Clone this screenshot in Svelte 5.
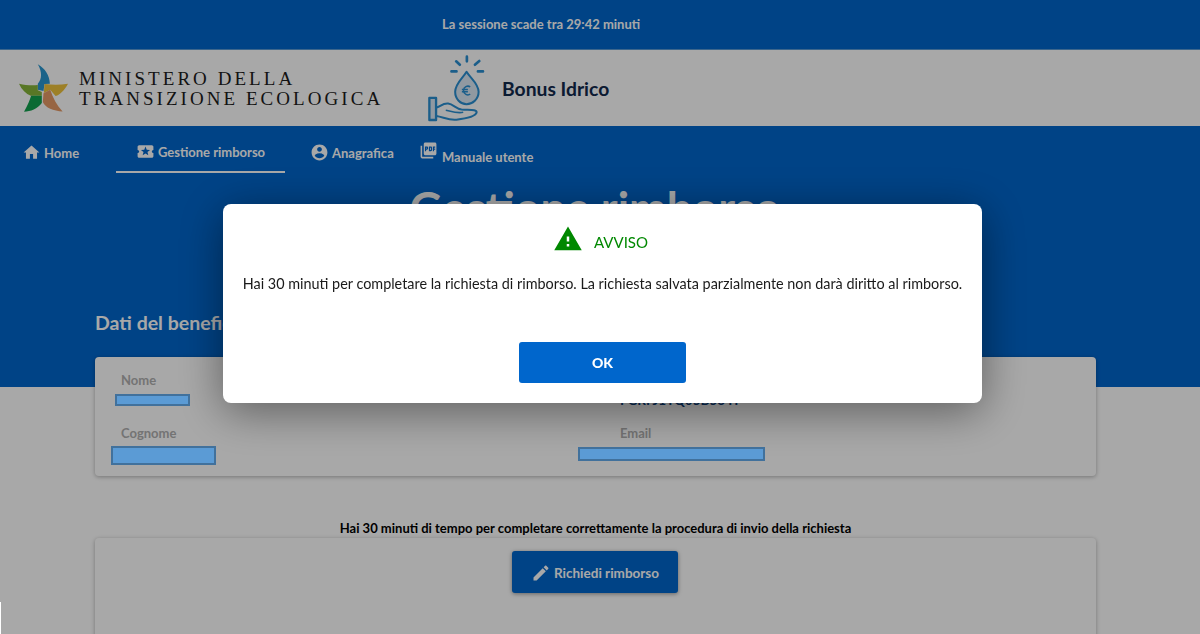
<script lang="ts">
    const navItems = [
        { label: 'Home', icon: 'M10 20v-6h4v6h5v-8h3L12 3 2 12h3v8z', cls: 'home' },
        { label: 'Gestione rimborso', icon: 'M20 12c0-1.1.9-2 2-2V6c0-1.1-.9-2-2-2H4c-1.1 0-1.99.9-1.99 2v4c1.1 0 1.99.9 1.99 2s-.89 2-2 2v4c0 1.1.9 2 2 2h16c1.1 0 2-.9 2-2v-4c-1.1 0-2-.9-2-2zm-4.42 4.8L12 14.5l-3.58 2.3 1.08-4.12-3.29-2.69 4.24-.25L12 5.8l1.54 3.95 4.24.25-3.29 2.69 1.09 4.11z', cls: 'active' },
        { label: 'Anagrafica', icon: 'M12 2C6.48 2 2 6.48 2 12s4.48 10 10 10 10-4.48 10-10S17.52 2 12 2zm0 3c1.66 0 3 1.34 3 3s-1.34 3-3 3-3-1.34-3-3 1.34-3 3-3zm0 14.2c-2.5 0-4.71-1.28-6-3.22.03-1.99 4-3.08 6-3.08 1.99 0 5.97 1.09 6 3.08-1.29 1.94-3.5 3.22-6 3.22z', cls: 'anag' },
        { label: 'Manuale utente', icon: 'M20 2H8c-1.1 0-2 .9-2 2v12c0 1.1.9 2 2 2h12c1.1 0 2-.9 2-2V4c0-1.1-.9-2-2-2zm-8.5 7.5c0 .83-.67 1.5-1.5 1.5H9v2H7.5V7H10c.83 0 1.5.67 1.5 1.5v1zm5 2c0 .83-.67 1.5-1.5 1.5h-2.5V7H15c.83 0 1.5.67 1.5 1.5v3zm4-3H19v1h1.5V11H19v2h-1.5V7h3v1.5zM9 9.5h1v-1H9v1zM4 6H2v14c0 1.1.9 2 2 2h14v-2H4V6zm10 5.5h1v-3h-1v3z', cls: 'pdf' }
    ];
</script>

<div class="page">
    <div class="session"><span>La sessione scade tra 29:42 minuti</span></div>

    <header class="brand">
        <div class="ministry">
            <svg class="star" viewBox="57 182 146 142" width="49" height="48" aria-hidden="true">
                <path d="M113 182C135 195 148 215 149 240L133 241L130 262L113 258V240C126 225 126 205 113 182Z" fill="#2a97d0" />
                <path d="M57 240C78 245 96 246 113 244V260L125 265V276H92C78 270 65 258 57 240Z" fill="#86b53a" />
                <path d="M133 241C158 244 180 244 203 240C192 260 180 272 166 277L150 258L131 268Z" fill="#eec23c" />
                <path d="M130 269L150 258C158 282 170 305 187 323C160 322 135 312 128 295Z" fill="#e59a66" />
                <path d="M125 276V298C112 316 92 323 72 324C82 305 90 288 93 276Z" fill="#12a24e" />
            </svg>
            <div class="ministry-name">MINISTERO DELLA<br />TRANSIZIONE ECOLOGICA</div>
        </div>
        <div class="product">
            <svg class="drop" viewBox="85 165 170 200" width="57" height="67" aria-hidden="true">
                <g fill="none" stroke="#2a8fd2" stroke-width="6" stroke-linejoin="round">
                    <path d="M200 215C188 235 166 250 166 275C166 297 182 312 200 312C218 312 236 297 236 275C236 250 212 235 200 215Z" fill="#dbe9f5" />
                    <path d="M211 260C203 255 191 260 191 271C191 282 203 287 211 282M186 268H204M186 275H204" stroke-width="4.5" />
                    <path d="M89 293H109V359H89Z" stroke-width="7" fill="#dbe9f5" />
                    <path d="M110 322C120 320 130 308 145 310C160 312 170 326 185 328C205 330 232 326 230 337C226 348 195 355 170 358C148 361 130 350 110 347" />
                    <path d="M138 330C150 332 170 340 190 336" stroke-width="5" />
                </g>
                <g stroke="#2a8fd2" stroke-width="8" stroke-linecap="round">
                    <path d="M201 170V184M169 184L180 194M238 183L225 194M155 214H170M234 214H249" />
                </g>
            </svg>
            <span class="product-name">Bonus Idrico</span>
        </div>
    </header>

    <section class="hero">
        <nav class="nav">
            {#each navItems as item}
                <a class="nav-item {item.cls}" href="#top">
                    <svg viewBox="0 0 24 24" width="19" height="19" aria-hidden="true"><path d={item.icon} fill="currentColor" /></svg>
                    <span>{item.label}</span>
                </a>
            {/each}
        </nav>
        <h1>Gestione rimborso</h1>
        <h2>Dati del beneficiario</h2>
    </section>

    <main class="content">
        <div class="card details">
            <div class="field">
                <div class="label">Nome</div>
                <div class="redact r-nome"></div>
            </div>
            <div class="field">
                <div class="label">POD</div>
                <div class="value">FGRFJ1TQ05B53 IT</div>
            </div>
            <div class="field">
                <div class="label">Cognome</div>
                <div class="redact r-cognome"></div>
            </div>
            <div class="field">
                <div class="label">Email</div>
                <div class="redact r-email"></div>
            </div>
        </div>

        <p class="notice">Hai 30 minuti di tempo per completare correttamente la procedura di invio della richiesta</p>

        <div class="card action">
            <button class="primary" type="button">
                <svg viewBox="0 0 24 24" width="20" height="20" aria-hidden="true"><path d="M3 17.25V21h3.75L17.81 9.94l-3.75-3.75L3 17.25zM20.71 7.04c.39-.39.39-1.02 0-1.41l-2.34-2.34c-.39-.39-1.02-.39-1.41 0l-1.83 1.83 3.75 3.75 1.83-1.83z" fill="currentColor" /></svg>
                Richiedi rimborso
            </button>
        </div>
    </main>
</div>

<div class="overlay">
    <div class="modal">
        <div class="modal-title">
            <svg viewBox="0 0 24 24" width="30" height="30" aria-hidden="true"><path d="M1 21h22L12 2 1 21zm12-3h-2v-2h2v2zm0-4h-2v-4h2v4z" fill="#008800" /></svg>
            <span>AVVISO</span>
        </div>
        <p>Hai 30 minuti per completare la richiesta di rimborso. La richiesta salvata parzialmente non darà diritto al rimborso.</p>
        <button class="ok" type="button">OK</button>
    </div>
</div>
<div class="sliver"></div>

<style>
    :global(body) {
        margin: 0;
        background: #fff;
        font-family: Lato, "Open Sans", sans-serif;
        color: #1a1a1a;
        overflow: hidden;
    }

    .page {
        height: 634px;
        overflow: hidden;
    }

    .session {
        height: 49px;
        background: #0066cc;
        color: #fff;
        font-size: 13px;
        font-weight: 700;
        line-height: 49px;
        padding-left: 442px;
        border-bottom: 1px solid #5b9bd5;
    }

    .brand {
        height: 76px;
        background: #fff;
        display: flex;
        align-items: center;
    }

    .ministry {
        display: flex;
        align-items: center;
        gap: 11px;
        width: 428px;
        padding-left: 19px;
        box-sizing: border-box;
    }

    .star {
        flex: none;
    }

    .ministry-name {
        font-family: "Liberation Serif", serif;
        font-size: 19px;
        line-height: 20px;
        letter-spacing: 3.05px;
        color: #1c1c1c;
        white-space: nowrap;
        padding-top: 1px;
    }

    .product {
        display: flex;
        align-items: center;
        gap: 17px;
    }

    .drop {
        flex: none;
    }

    .product-name {
        font-size: 19.3px;
        font-weight: 700;
        color: #12294d;
    }

    .hero {
        height: 261px;
        background: #0066cc;
        color: #fff;
        box-sizing: border-box;
    }

    .nav {
        display: flex;
        height: 47px;
    }

    .nav-item {
        display: flex;
        align-items: center;
        gap: 3px;
        color: #fff;
        text-decoration: none;
        font-size: 13px;
        font-weight: 700;
        white-space: nowrap;
        box-sizing: border-box;
        padding-top: 6px;
    }

    .home {
        width: 116px;
        padding-left: 22px;
    }

    .active {
        width: 169px;
        justify-content: center;
        border-bottom: 2px solid #fff;
    }

    .anag {
        margin-left: 25px;
        width: 109px;
    }

    .pdf {
        align-items: flex-start;
        padding-top: 15px;
    }

    .pdf span {
        margin-top: 8px;
        margin-left: 1px;
    }

    h1 {
        margin: 10px 0 0;
        padding-right: 10px;
        text-align: center;
        font-size: 45px;
        line-height: 50px;
        font-weight: 700;
    }

    h2 {
        margin: 76px 0 0 95px;
        font-size: 19.5px;
        line-height: 28px;
        font-weight: 700;
    }

    .content {
        padding: 0 104px 0 95px;
        margin-top: -30px;
        position: relative;
    }

    .card {
        background: #fff;
        border-radius: 4px;
        box-shadow: 0 1px 4px rgba(0, 0, 0, 0.3);
    }

    .details {
        height: 119px;
        box-sizing: border-box;
        padding: 15px 0 0 26px;
        display: grid;
        grid-template-columns: 499px 1fr;
        grid-template-rows: 53px 1fr;
    }

    .label {
        font-size: 13px;
        line-height: 16px;
        font-weight: 700;
        color: #b0b0b0;
    }

    .value {
        font-size: 13.5px;
        font-weight: 700;
        color: #0b3f80;
        margin-top: 4px;
    }

    .redact {
        position: relative;
        z-index: 20;
        background: #5b9bd5;
        border: 2px solid #41719c;
        box-sizing: border-box;
    }

    .r-nome {
        width: 75px;
        height: 12px;
        margin: 6px 0 0 -6px;
    }

    .r-cognome {
        width: 105px;
        height: 19px;
        margin: 5px 0 0 -10px;
    }

    .r-email {
        width: 187px;
        height: 14px;
        margin: 6px 0 0 -42px;
    }

    .notice {
        margin: 44px 0 0;
        text-align: center;
        font-size: 13px;
        line-height: 16px;
        font-weight: 700;
        color: #000;
    }

    .action {
        margin-top: 2px;
        height: 140px;
        padding-top: 13px;
        box-sizing: border-box;
        display: flex;
        justify-content: center;
        align-items: flex-start;
    }

    .primary {
        width: 166px;
        height: 42px;
        margin-left: -1px;
        padding: 2px 0 0;
        display: flex;
        align-items: center;
        justify-content: center;
        gap: 3px;
        background: #0066cc;
        color: #fff;
        border: none;
        border-radius: 3px;
        font: 700 13.5px Lato, sans-serif;
        box-shadow: 0 1px 4px rgba(0, 0, 0, 0.4);
    }

    .overlay {
        position: fixed;
        inset: 0;
        z-index: 10;
        background: rgba(0, 0, 0, 0.34);
        display: flex;
        justify-content: center;
        align-items: flex-start;
        padding: 204px 0 0 5px;
    }

    .modal {
        width: 759px;
        height: 199px;
        background: #fff;
        border-radius: 8px;
        box-shadow: 0 8px 45px rgba(0, 0, 0, 0.45);
        display: flex;
        flex-direction: column;
        align-items: center;
    }

    .modal-title {
        display: flex;
        align-items: center;
        gap: 11px;
        margin: 18px 4px 0 0;
        height: 34px;
        color: #008800;
        font-size: 15px;
    }

    .modal-title span {
        margin-top: 6px;
    }

    .modal p {
        margin: 16px 0 0;
        font-size: 14.4px;
        line-height: 24px;
        color: #1a1a1a;
        white-space: nowrap;
    }

    .ok {
        margin-top: 46px;
        width: 167px;
        height: 41px;
        background: #0066cc;
        color: #fff;
        border: none;
        border-radius: 3px;
        font: 900 14px Lato, sans-serif;
    }

    .sliver {
        position: fixed;
        left: 0;
        top: 602px;
        width: 1px;
        height: 32px;
        background: #fff;
        z-index: 11;
    }
</style>
